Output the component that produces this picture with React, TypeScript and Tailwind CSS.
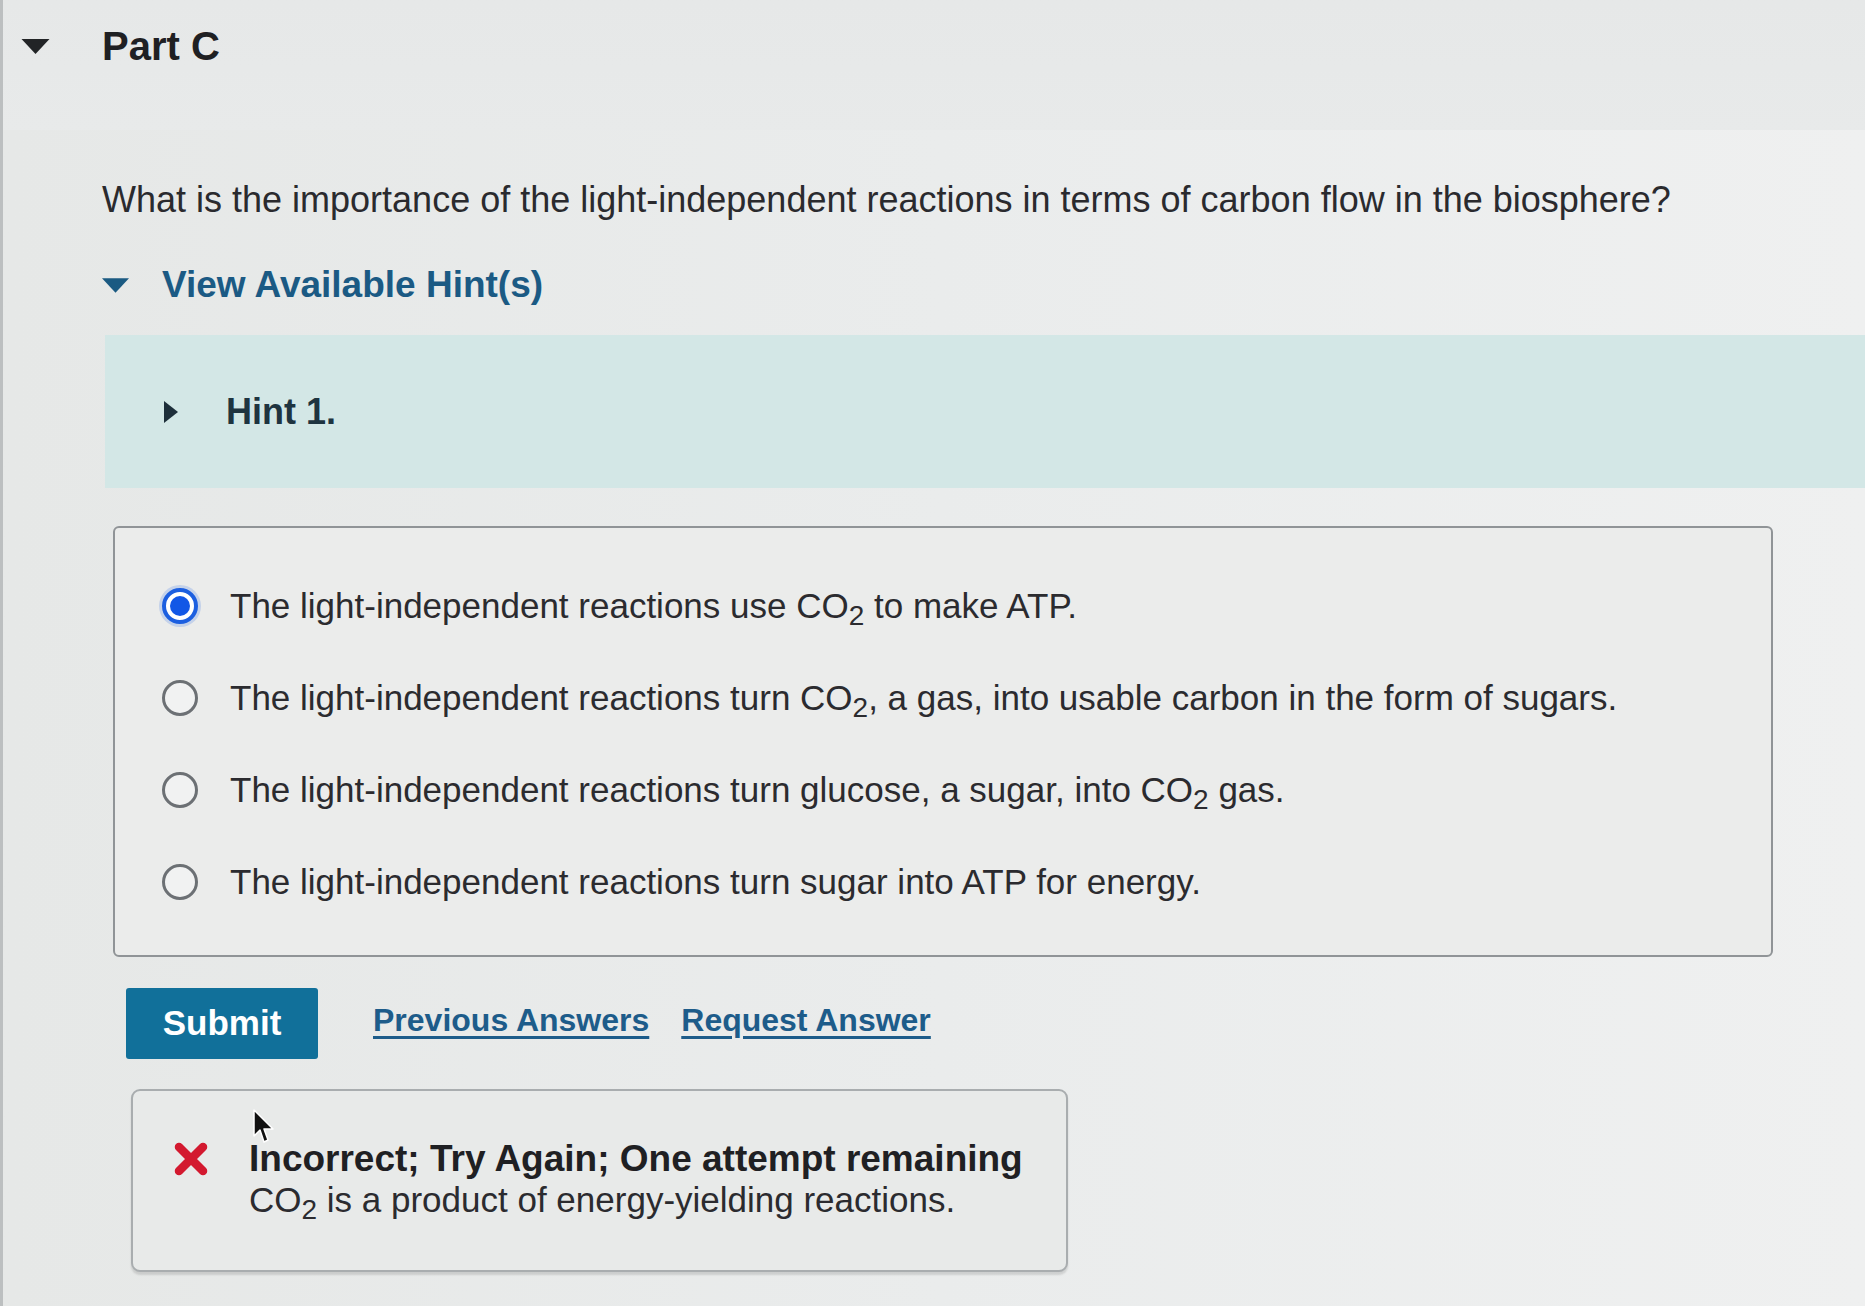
import React from "react";

const font = { fontFamily: '"Liberation Sans", Arial, Helvetica, sans-serif' };

function CaretDown({ className }: { className: string }) {
  return (
    <svg viewBox="0 0 28 15" className={className} aria-hidden>
      <path d="M0 0 L28 0 L14 15 Z" fill="currentColor" />
    </svg>
  );
}

function CaretRight({ className }: { className: string }) {
  return (
    <svg viewBox="0 0 14 22" className={className} aria-hidden>
      <path d="M0 0 L14 11 L0 22 Z" fill="currentColor" />
    </svg>
  );
}

function Radio({ checked }: { checked: boolean }) {
  if (checked) {
    return (
      <span className="flex h-[36px] w-[36px] shrink-0 items-center justify-center rounded-full border-[4px] border-[#1c5fe0] bg-white shadow-[0_0_0_3px_rgba(80,130,230,0.25)]">
        <span className="h-[20px] w-[20px] rounded-full bg-[#1257e6]" />
      </span>
    );
  }
  return <span className="h-[36px] w-[36px] shrink-0 rounded-full border-[3px] border-[#6c7074] bg-[#f1f2f2]" />;
}

const Sub = ({ children }: { children: React.ReactNode }) => (
  <sub className="text-[0.8em]">{children}</sub>
);

const options: { checked: boolean; text: React.ReactNode }[] = [
  {
    checked: true,
    text: (
      <>
        The light-independent reactions use CO<Sub>2</Sub> to make ATP.
      </>
    ),
  },
  {
    checked: false,
    text: (
      <>
        The light-independent reactions turn CO<Sub>2</Sub>, a gas, into usable carbon in the form of sugars.
      </>
    ),
  },
  {
    checked: false,
    text: (
      <>
        The light-independent reactions turn glucose, a sugar, into CO<Sub>2</Sub> gas.
      </>
    ),
  },
  {
    checked: false,
    text: <>The light-independent reactions turn sugar into ATP for energy.</>,
  },
];

export default function App() {
  return (
    <div
      className="min-h-screen w-full border-l-[3px] border-[#bcbfc0] bg-gradient-to-r from-[#e6e8e7] via-[#eaecec] to-[#eff0f0] text-[#2a2a2e]"
      style={font}
    >
      {/* header */}
      <div className="flex h-[130px] items-start bg-gradient-to-b from-[#e6e8e8] to-[#e8eaea] pl-[18px] pt-[23px]">
        <div className="flex h-[46px] items-center">
          <CaretDown className="h-[15px] w-[29px] text-[#222426]" />
          <h1 className="ml-[52px] text-[40px] font-bold leading-[46px] text-[#1f2023]">Part C</h1>
        </div>
      </div>

      <div className="pl-[99px]">
        <p className="mt-[48px] text-[36px] leading-[44px] text-[#2a2a2e]">
          What is the importance of the light-independent reactions in terms of carbon flow in the biosphere?
        </p>

        <div className="mt-[42px] flex h-[42px] items-center">
          <CaretDown className="h-[15px] w-[27px] text-[#1b5a82]" />
          <span className="ml-[33px] text-[37px] font-bold leading-[42px] text-[#1b5a84]">View Available Hint(s)</span>
        </div>

        <div className="ml-[3px] mt-[29px] flex h-[153px] items-center bg-[#d3e7e6] pl-[59px]">
          <CaretRight className="h-[22px] w-[14px] text-[#1d2f3a]" />
          <span className="ml-[48px] text-[36px] font-bold leading-[42px] text-[#1e3440]">Hint 1.</span>
        </div>

        <div className="ml-[11px] mt-[38px] w-[1660px] rounded-[6px] border-2 border-[#909497] bg-[#ebeceb] pb-[27px] pl-[47px] pt-[32px]">
          {options.map((o, i) => (
            <div key={i} className="flex h-[92px] items-center">
              <Radio checked={o.checked} />
              <span className="ml-[32px] text-[35px] leading-[42px] text-[#2b2b2f]">{o.text}</span>
            </div>
          ))}
        </div>

        <div className="ml-[24px] mt-[31px] flex items-center">
          <button
            type="button"
            className="h-[71px] w-[192px] rounded-[3px] bg-[#11709a] text-[35px] font-bold text-white"
          >
            Submit
          </button>
          <a className="mb-[8px] ml-[55px] text-[32px] font-bold text-[#1d5c8a] underline underline-offset-[5px]" href="#">
            Previous Answers
          </a>
          <a className="mb-[8px] ml-[32px] text-[32px] font-bold text-[#1d5c8a] underline underline-offset-[5px]" href="#">
            Request Answer
          </a>
        </div>

        <div className="relative ml-[29px] mt-[30px] w-[937px] rounded-[9px] border-2 border-[#a9adaf] bg-[#e8eae9] pb-[50px] pl-[39px] pt-[47px] shadow-[0_3px_2px_rgba(0,0,0,0.12)]">
          <div className="flex items-start">
            <svg viewBox="0 0 38 36" className="mt-[3px] h-[36px] w-[38px] shrink-0" aria-hidden>
              <path d="M7 6 L31 30 M31 6 L7 30" stroke="#d3192f" strokeWidth="8.5" strokeLinecap="round" />
            </svg>
            <div className="ml-[39px]">
              <div className="text-[37px] font-bold leading-[41px] text-[#1f2023]">
                Incorrect; Try Again; One attempt remaining
              </div>
              <div className="text-[35px] leading-[41px] text-[#2b2b2f]">
                CO<Sub>2</Sub> is a product of energy-yielding reactions.
              </div>
            </div>
          </div>
          <svg viewBox="0 0 24 36" className="absolute left-[119px] top-[18px] h-[36px] w-[24px]" aria-hidden>
            <path
              d="M2 1 L2 27 L8 21 L12 33 L16 31 L12 20 L21 20 Z"
              fill="#111"
              stroke="#fff"
              strokeWidth="1.5"
              strokeLinejoin="round"
            />
          </svg>
        </div>
      </div>
    </div>
  );
}
